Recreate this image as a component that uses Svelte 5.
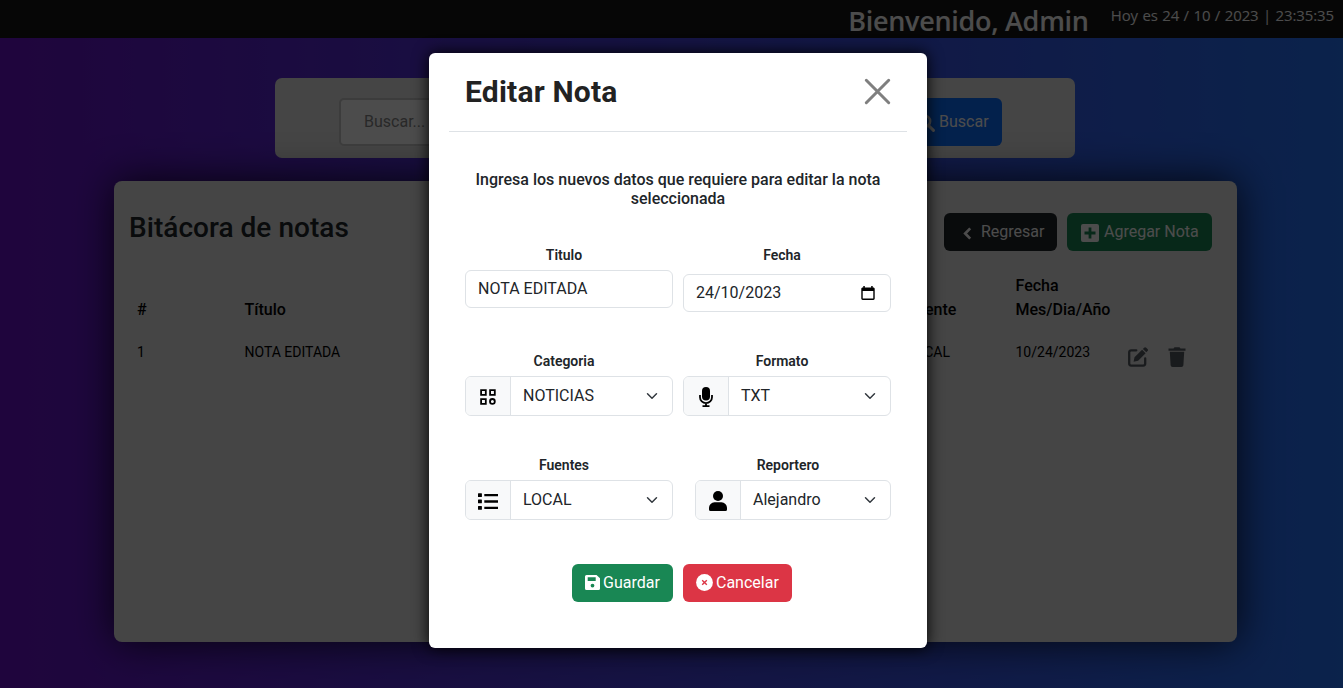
<script>
  const notes = [{ id: 1, title: 'NOTA EDITADA', source: 'LOCAL', date: '10/24/2023' }];
</script>

{#snippet chevron()}
  <svg class="chev" viewBox="0 0 16 16" width="16" height="12" preserveAspectRatio="xMidYMid meet"><path d="m2 5 6 6 6-6" fill="none" stroke="#343a40" stroke-width="2" stroke-linecap="round" stroke-linejoin="round" /></svg>
{/snippet}

<div class="page">
  <header class="topbar">
    <h1>Bienvenido, Admin</h1>
    <p>Hoy es 24 / 10 / 2023 | 23:35:35</p>
  </header>

  <section class="search">
    <div class="search-input">Buscar...</div>
    <button class="btn search-btn">
      <svg width="18" height="18" viewBox="0 0 18 18"><circle cx="7.3" cy="7.3" r="5.8" fill="none" stroke="#fff" stroke-width="2.6" /><path d="m11.6 11.6 4.8 4.8" stroke="#fff" stroke-width="2.9" stroke-linecap="round" /></svg>
      Buscar
    </button>
  </section>

  <main class="card">
    <div class="card-head">
      <h2>Bitácora de notas</h2>
      <button class="btn back">
        <svg width="9" height="13" viewBox="0 0 9 13"><path d="m7.2 1.4-5 5.1 5 5.1" fill="none" stroke="#fff" stroke-width="2.7" /></svg>
        Regresar
      </button>
      <button class="btn add">
        <svg width="18" height="18" viewBox="0 0 18 18"><path fill="#fff" fill-rule="evenodd" d="M2 0h14a2 2 0 0 1 2 2v14a2 2 0 0 1-2 2H2a2 2 0 0 1-2-2V2a2 2 0 0 1 2-2Zm5.600 3.500v4.100H3.500v2.800h4.100v4.100h2.800v-4.100h4.100V7.600h-4.100V3.500Z" /></svg>
        Agregar Nota
      </button>
    </div>
    <div class="row head">
      <span>#</span><span>Título</span><span>Fuente</span><span>Fecha<br />Mes/Dia/Año</span>
    </div>
    {#each notes as n}
      <div class="row">
        <span>{n.id}</span><span>{n.title}</span><span>{n.source}</span><span>{n.date}</span>
        <span class="actions">
          <svg width="20" height="20" viewBox="0 0 20 20"><path d="M8.3 3.3H3.2A2 2 0 0 0 1.2 5.3v11.3a2 2 0 0 0 2 2h12a2 2 0 0 0 2-2V11.5" fill="none" stroke="#565c62" stroke-width="2.300" stroke-linecap="round" /><path fill="#565c62" d="m5.6 14.7.9-4.5 7.600-7.500 3.500 3.500-7.500 7.600ZM14.900 1.900l1.200-1.200a1.500 1.500 0 0 1 2.100 0l1.300 1.300a1.500 1.500 0 0 1 0 2.100l-1.200 1.200Z" /></svg>
          <svg width="18" height="20" viewBox="0 0 18 20"><path fill="#565c62" d="M.5 1.600h5L6.500.2h5l1 1.400h5v2.200H.5ZM1.800 4.800h14.400l-.8 13.400a2 2 0 0 1-2 1.800H4.600a2 2 0 0 1-2-1.800Z" /></svg>
        </span>
      </div>
    {/each}
  </main>
</div>

<div class="overlay">
  <div class="modal">
    <div class="modal-head">
      <h3>Editar Nota</h3>
      <svg width="27" height="27" viewBox="0 0 27 27"><path d="m2.300 2.300 22.400 22.400M24.700 2.300 2.300 24.700" stroke="#7f7f7f" stroke-width="3" stroke-linecap="round" /></svg>
    </div>
    <p class="lead">Ingresa los nuevos datos que requiere para editar la nota seleccionada</p>

    <div class="fields">
      <div class="field">
        <label for="t">Titulo</label>
        <div class="control" id="t">NOTA EDITADA</div>
      </div>
      <div class="field date">
        <label for="f">Fecha</label>
        <div class="control" id="f">
          24/10/2023
          <svg width="14" height="15" viewBox="0 0 14 15"><path fill="#000" fill-rule="evenodd" d="M2.300 0h1.500v1.400h6.400V0h1.500v1.400h.6c.8 0 1.400.6 1.400 1.400v9.800c0 .8-.6 1.400-1.400 1.400H1.700c-.8 0-1.400-.6-1.400-1.400V2.800c0-.8.6-1.400 1.400-1.400h.6ZM1.700 5v7.600h10.600V5Z" /></svg>
        </div>
      </div>

      <div class="field">
        <label for="c">Categoria</label>
        <div class="group" id="c">
          <i><svg width="16" height="16" viewBox="0 0 16 16"><g fill="none" stroke="#000" stroke-width="1.800"><path d="M1.100 1.100h4.700v4.700H1.100ZM10.100 1.100h4.700v4.700h-4.700ZM1.100 10.100h4.700v4.700H1.100Z" /><circle cx="12.400" cy="12.400" r="2.400" /></g></svg></i>
          <span>NOTICIAS</span>{@render chevron()}
        </div>
      </div>
      <div class="field">
        <label for="m">Formato</label>
        <div class="group" id="m">
          <i><svg width="14" height="20" viewBox="0 0 14 20"><rect x="3" y="0" width="8" height="13.500" rx="4" /><path d="M1 8v2.200a6 6 0 0 0 12 0V8M7 16.500V19M3.500 19.100h7" fill="none" stroke="#000" stroke-width="1.800" /></svg></i>
          <span>TXT</span>{@render chevron()}
        </div>
      </div>

      <div class="field">
        <label for="s">Fuentes</label>
        <div class="group" id="s">
          <i><svg width="20" height="17" viewBox="0 0 20 17"><path d="M.5.2h2.900a.5.5 0 0 1 .5.5v2.700a.5.5 0 0 1-.5.5H.5a.5.5 0 0 1-.5-.5V.7A.5.5 0 0 1 .5.2ZM.5 6.600h2.900a.5.5 0 0 1 .5.5v2.700a.5.5 0 0 1-.5.5H.5a.5.5 0 0 1-.5-.5V7.100a.5.5 0 0 1 .5-.5ZM.5 13h2.900a.5.5 0 0 1 .5.5v2.700a.5.5 0 0 1-.5.5H.5a.5.5 0 0 1-.5-.5v-2.700a.5.5 0 0 1 .5-.5ZM6.300.9H20v2.400H6.300ZM6.300 7.300H20v2.400H6.300ZM6.300 13.700H20v2.400H6.300Z" /></svg></i>
          <span>LOCAL</span>{@render chevron()}
        </div>
      </div>
      <div class="field reporter">
        <label for="r">Reportero</label>
        <div class="group" id="r">
          <i><svg width="18" height="20" viewBox="0 0 18 20"><circle cx="9" cy="5" r="5" /><path d="M5.500 11.300h7a5.500 5.500 0 0 1 5.500 5.500v1.700a1.500 1.500 0 0 1-1.500 1.500h-15A1.500 1.500 0 0 1 0 18.500v-1.700a5.500 5.500 0 0 1 5.500-5.500Z" /></svg></i>
          <span>Alejandro</span>{@render chevron()}
        </div>
      </div>
    </div>

    <div class="buttons">
      <button class="btn save">
        <svg width="15" height="15" viewBox="0 0 15 15"><path fill="#fff" fill-rule="evenodd" d="M1.500 0h10L15 3.300v10.200a1.500 1.500 0 0 1-1.500 1.500h-12A1.500 1.500 0 0 1 0 13.500v-12A1.500 1.500 0 0 1 1.500 0ZM2.700 2.200v3.900h8V2.200ZM7.500 8.700a1.900 1.900 0 1 0 0 3.800 1.900 1.900 0 0 0 0-3.800Z" /></svg>
        Guardar
      </button>
      <button class="btn cancel">
        <svg width="17" height="17" viewBox="0 0 17 17"><circle cx="8.500" cy="8.500" r="8.400" fill="#fff" /><path d="m6.200 6.200 4.600 4.600M10.800 6.200l-4.600 4.600" stroke="#dc3545" stroke-width="1.400" /></svg>
        Cancelar
      </button>
    </div>
  </div>
</div>

<style>
  :global(body) { margin: 0; overflow: hidden; }
  :global(*) { box-sizing: border-box; }
  h1, h2, h3, p { margin: 0; }
  svg { display: block; flex: none; }
  .page, .overlay { width: 100%; height: 688px; font-family: Roboto, "Liberation Sans", sans-serif; }
  .page { background: linear-gradient(to right, #6a11cb 0%, #2575fc 100%); }
  .topbar { height: 38px; background: #171717; color: #fff; display: flex; justify-content: flex-end; gap: 22px; padding-right: 9px; font-family: "Open Sans", sans-serif; white-space: nowrap; }
  .topbar h1 { font-size: 27px; font-weight: 600; line-height: 42px; letter-spacing: -.29px; }
  .topbar p { font-size: 15px; line-height: 31px; letter-spacing: -.12px; word-spacing: .7px; }
  .search { width: 800px; height: 80px; margin: 40px 0 0 275px; padding: 20px 73px 0 64px; background: #e6e6e6; border-radius: 7px; display: flex; justify-content: space-between; }
  .search-input { width: 540px; height: 48px; border: 2px solid #c8c8c8; border-radius: 5px; background: #fff; color: #888; font-size: 16px; line-height: 43px; padding-left: 23px; }
  .btn { border: 0; border-radius: 6px; height: 38px; color: #fff; font-family: inherit; font-size: 16px; line-height: 38px; padding: 0; display: flex; align-items: center; white-space: nowrap; }
  .search-btn { background: #0d6efd; height: 48px; width: 100px; gap: 4px; padding-left: 15px; }
  .search-btn svg { margin-top: 2px; }
  .card { width: 1123px; height: 461px; margin: 23px 0 0 114px; padding-top: 32px; background: #e6e6e6; border-radius: 8px; box-shadow: 0 0 40px rgba(0, 0, 0, .8); }
  .card-head { display: flex; padding: 0 25px 0 15px; height: 61px; }
  .card-head h2 { flex: 1; font-size: 28px; font-weight: 500; line-height: 29px; color: #212529; letter-spacing: .04px; }
  .back { width: 113px; background: #212529; margin-right: 10px; gap: 9px; padding-left: 19px; }
  .back svg { margin-top: 2px; }
  .add { width: 145px; background: #198754; gap: 5px; padding-left: 14px; }
  .add svg { margin-top: 2px; }
  .row { display: grid; grid-template-columns: 107.5px 663px 108px 112.5px auto; padding-left: 23px; font-size: 14px; line-height: 24px; color: #000; align-items: start; margin-top: 18px; }
  .head { font-size: 16px; font-weight: 500; align-items: end; margin-top: 0; height: 48px; }
  .actions { display: flex; gap: 20px; padding-top: 7px; }
  .overlay { position: absolute; inset: 0; background: rgba(0, 0, 0, .7); padding: 53px 0 0 429px; }
  .modal { width: 498px; height: 595px; background: #fff; border-radius: 6px; padding: 0 20px; color: #212529; box-shadow: 0 0 16px #000; }
  .modal-head { height: 79px; border-bottom: 1px solid #dee2e6; display: flex; align-items: center; justify-content: space-between; padding: 0 16px; }
  .modal-head h3 { font-size: 30px; font-weight: 700; line-height: 36px; letter-spacing: .2px; color: #222; }
  .modal-head svg { margin-bottom: 2px; }
  .lead { margin-top: 38px; font-size: 16px; line-height: 19px; font-weight: 500; text-align: center; padding: 0 20px; }
  .fields { display: grid; grid-template-columns: 208px 208px; grid-template-rows: 106px 104px 65px; gap: 0 10px; padding: 0 16px; margin-top: 37px; }
  .field label { display: block; text-align: center; font-size: 14px; font-weight: 600; line-height: 20px; height: 25px; padding-right: 10px; }
  .date label { height: 29px; }
  .control { height: 38px; border: 1px solid #dee2e6; border-radius: 6px; padding: 0 15px 0 12px; line-height: 35px; font-size: 16px; display: flex; justify-content: space-between; align-items: flex-start; }
  .control svg { margin-top: 11px; }
  .group { display: flex; height: 40px; border: 1px solid #dee2e6; border-radius: 6px; overflow: hidden; align-items: center; font-size: 16px; line-height: 37px; padding-right: 12px; }
  .reporter { padding-left: 12px; }
  .group i { width: 45px; height: 38px; background: #f8f9fa; border-right: 1px solid #dee2e6; display: flex; align-items: center; justify-content: center; padding-top: 2px; }
  .group span { flex: 1; padding-left: 12px; height: 38px; }
  .buttons { display: flex; gap: 10px; padding-left: 123px; margin-top: 44px; }
  .save { width: 101px; background: #198754; gap: 3px; padding-left: 13px; }
  .save svg { margin-bottom: 1px; }
  .cancel { width: 109px; background: #dc3545; gap: 3.500px; padding-left: 12.500px; }
  .cancel svg { margin-bottom: 1px; }
</style>
